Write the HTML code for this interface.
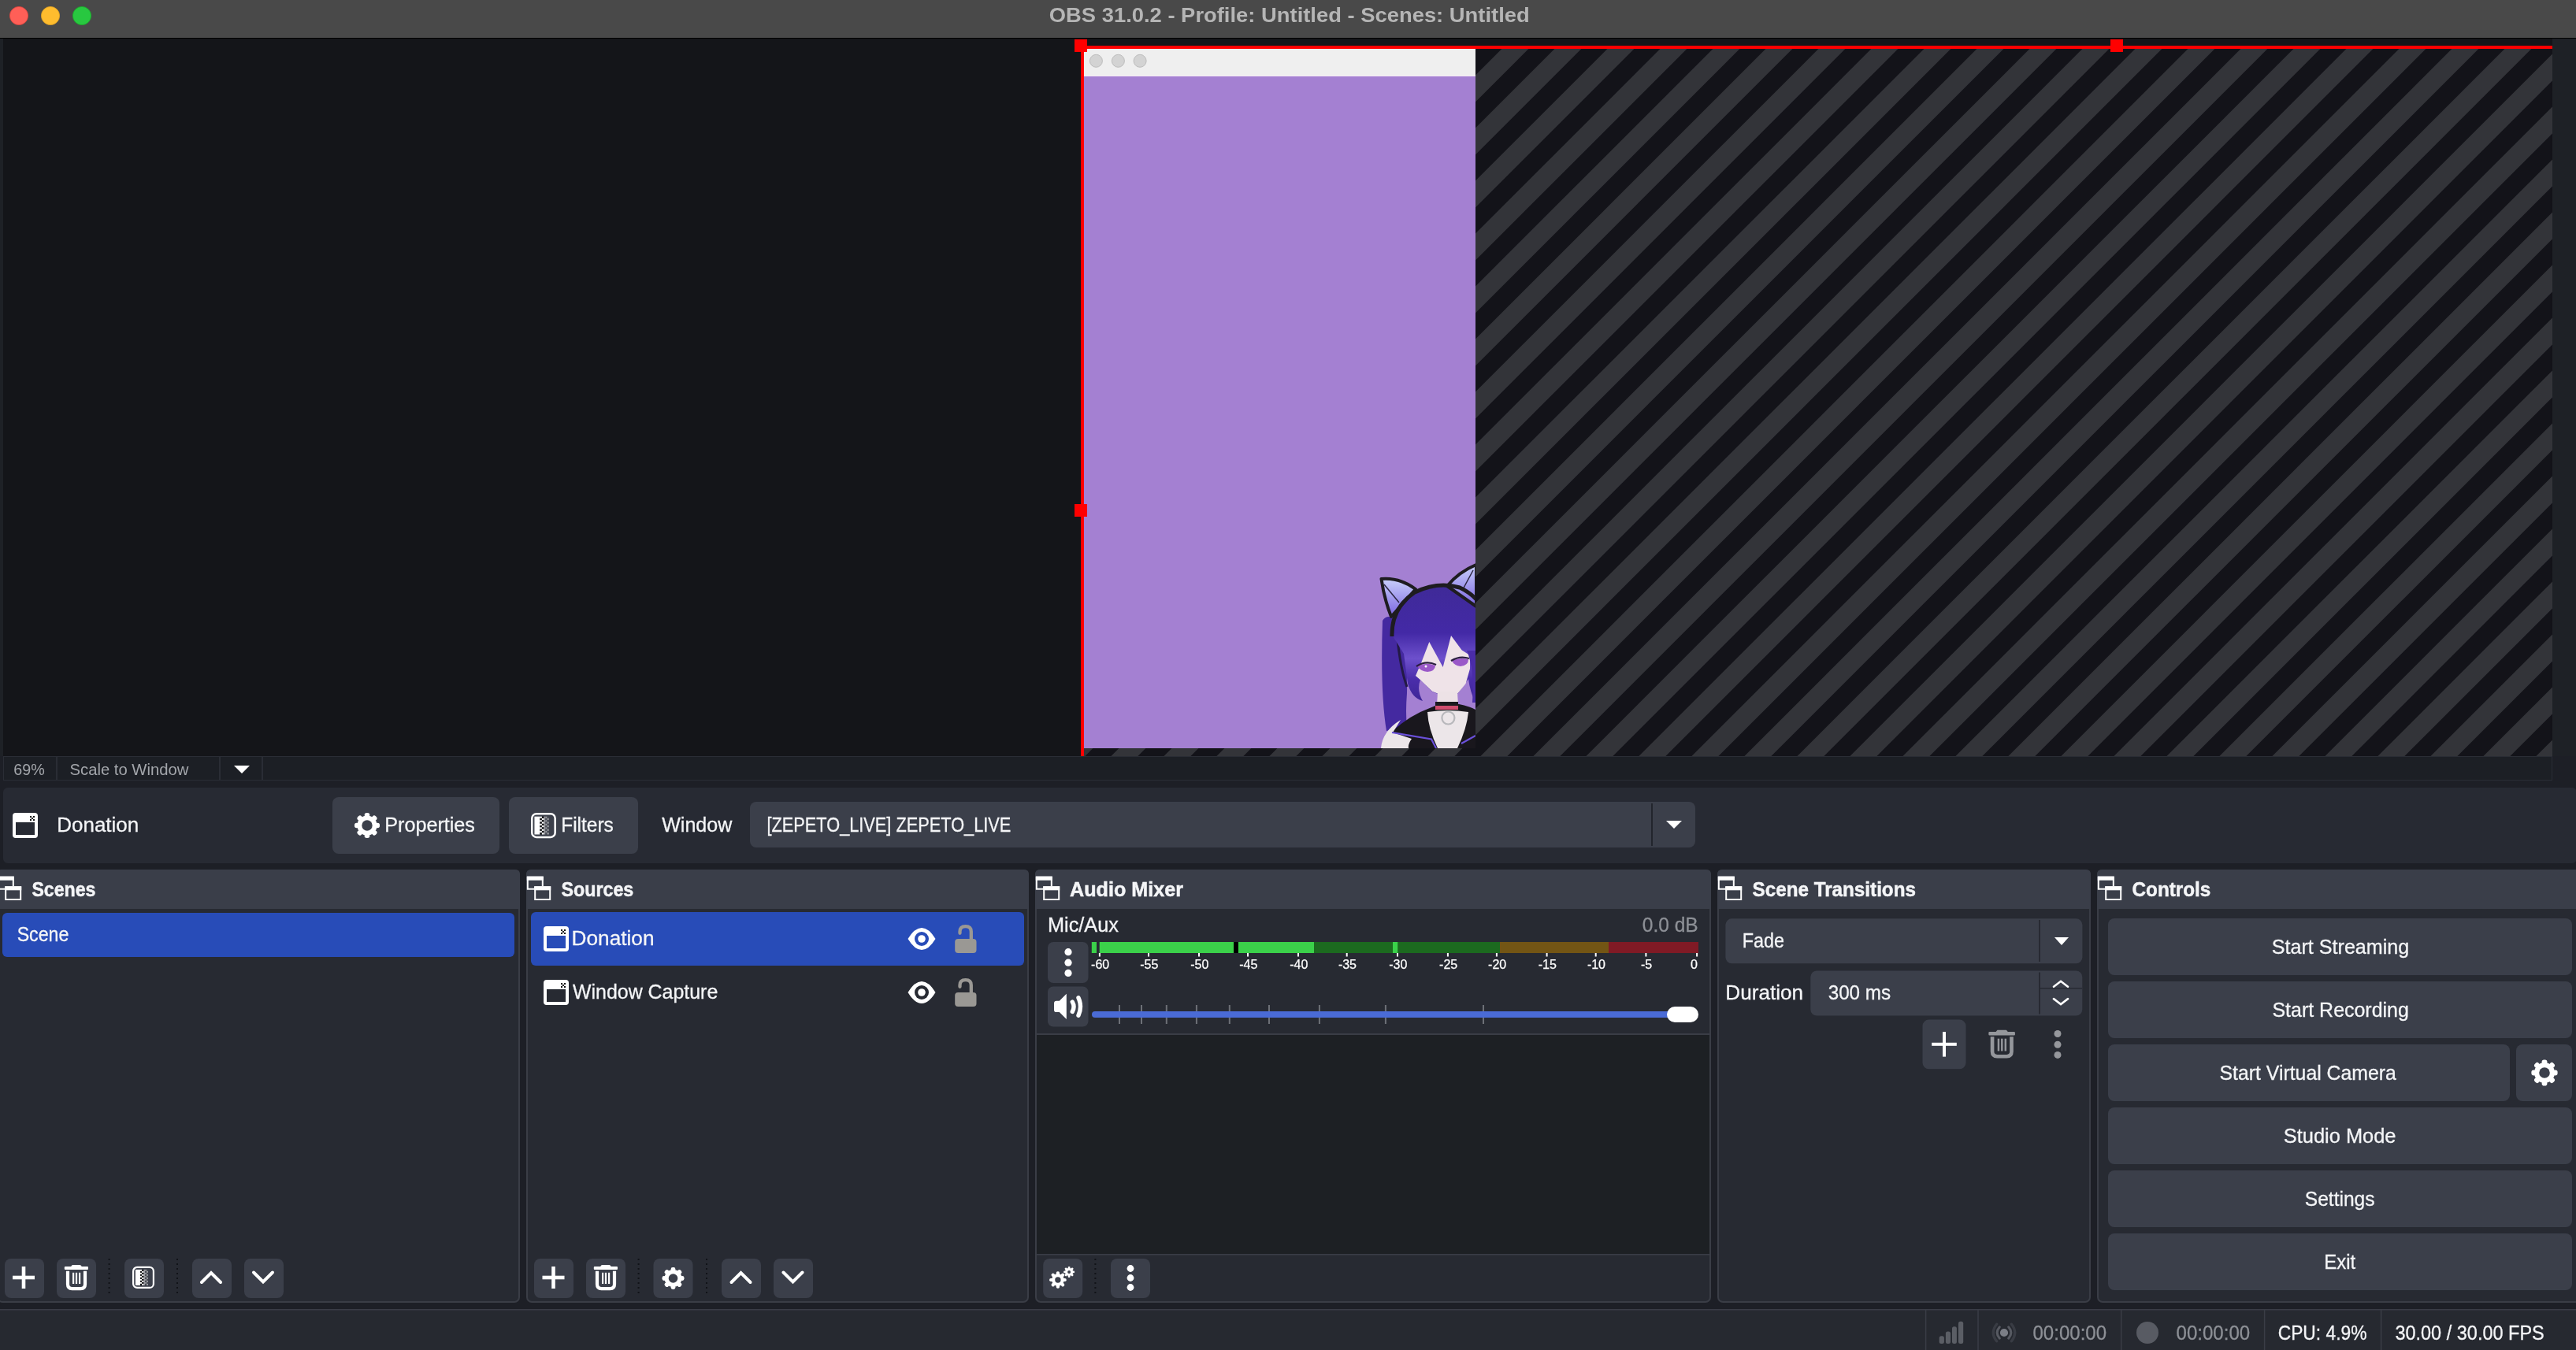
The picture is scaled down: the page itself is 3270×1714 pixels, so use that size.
<!DOCTYPE html>
<html><head><meta charset="utf-8"><title>OBS</title>
<style>html,body{margin:0;padding:0;background:#1d1f26;overflow:hidden;width:3270px;height:1714px}svg{display:block;position:absolute;left:0;top:0}#tx{will-change:transform}text{font-family:"Liberation Sans",sans-serif;white-space:pre}</style>
</head><body>
<svg width="3270" height="1714" viewBox="0 0 3270 1714">
<rect x="0" y="0" width="3270" height="1714" rx="0" fill="#1d1f26" />
<rect x="0" y="0" width="3270" height="48" rx="0" fill="#494949" />
<rect x="0" y="48" width="3270" height="1" rx="0" fill="#000" />
<circle cx="24" cy="20" r="11.6" fill="#ff5f57" stroke="#e0443e" stroke-width="0.8"/>
<circle cx="64" cy="20" r="11.6" fill="#febc2e" stroke="#dea123" stroke-width="0.8"/>
<circle cx="104" cy="20" r="11.6" fill="#28c840" stroke="#1aab29" stroke-width="0.8"/>
<rect x="0" y="49" width="3270" height="911" rx="0" fill="#141519" />
<rect x="0" y="49" width="4" height="911" rx="0" fill="#1e2126" />
<rect x="3240" y="49" width="30" height="911" rx="0" fill="#1e2126" />
<clipPath id="cv"><rect x="1376" y="62" width="1864" height="898"/></clipPath>
<g clip-path="url(#cv)">
<rect x="1376" y="62" width="1864" height="898" fill="#131319"/>
<path d="M1236.4,62L1270.4,62L372.4,960L338.4,960ZM1303.4,62L1337.4,62L439.4,960L405.4,960ZM1370.4,62L1404.4,62L506.4,960L472.4,960ZM1437.4,62L1471.4,62L573.4,960L539.4,960ZM1504.4,62L1538.4,62L640.4,960L606.4,960ZM1571.4,62L1605.4,62L707.4,960L673.4,960ZM1638.4,62L1672.4,62L774.4,960L740.4,960ZM1705.4,62L1739.4,62L841.4,960L807.4,960ZM1772.4,62L1806.4,62L908.4,960L874.4,960ZM1839.4,62L1873.4,62L975.4,960L941.4,960ZM1906.4,62L1940.4,62L1042.4,960L1008.4,960ZM1973.4,62L2007.4,62L1109.4,960L1075.4,960ZM2040.4,62L2074.4,62L1176.4,960L1142.4,960ZM2107.4,62L2141.4,62L1243.4,960L1209.4,960ZM2174.4,62L2208.4,62L1310.4,960L1276.4,960ZM2241.4,62L2275.4,62L1377.4,960L1343.4,960ZM2308.4,62L2342.4,62L1444.4,960L1410.4,960ZM2375.4,62L2409.4,62L1511.4,960L1477.4,960ZM2442.4,62L2476.4,62L1578.4,960L1544.4,960ZM2509.4,62L2543.4,62L1645.4,960L1611.4,960ZM2576.4,62L2610.4,62L1712.4,960L1678.4,960ZM2643.4,62L2677.4,62L1779.4,960L1745.4,960ZM2710.4,62L2744.4,62L1846.4,960L1812.4,960ZM2777.4,62L2811.4,62L1913.4,960L1879.4,960ZM2844.4,62L2878.4,62L1980.4,960L1946.4,960ZM2911.4,62L2945.4,62L2047.4,960L2013.4,960ZM2978.4,62L3012.4,62L2114.4,960L2080.4,960ZM3045.4,62L3079.4,62L2181.4,960L2147.4,960ZM3112.4,62L3146.4,62L2248.4,960L2214.4,960ZM3179.4,62L3213.4,62L2315.4,960L2281.4,960ZM3246.4,62L3280.4,62L2382.4,960L2348.4,960ZM3313.4,62L3347.4,62L2449.4,960L2415.4,960ZM3380.4,62L3414.4,62L2516.4,960L2482.4,960ZM3447.4,62L3481.4,62L2583.4,960L2549.4,960ZM3514.4,62L3548.4,62L2650.4,960L2616.4,960ZM3581.4,62L3615.4,62L2717.4,960L2683.4,960ZM3648.4,62L3682.4,62L2784.4,960L2750.4,960ZM3715.4,62L3749.4,62L2851.4,960L2817.4,960ZM3782.4,62L3816.4,62L2918.4,960L2884.4,960ZM3849.4,62L3883.4,62L2985.4,960L2951.4,960ZM3916.4,62L3950.4,62L3052.4,960L3018.4,960ZM3983.4,62L4017.4,62L3119.4,960L3085.4,960ZM4050.4,62L4084.4,62L3186.4,960L3152.4,960ZM4117.4,62L4151.4,62L3253.4,960L3219.4,960ZM4184.4,62L4218.4,62L3320.4,960L3286.4,960Z" fill="#333439"/>
</g>
<rect x="1376" y="62" width="497" height="35" rx="0" fill="#efefef" />
<rect x="1376" y="96" width="497" height="1" rx="0" fill="#f6e9f6" />
<circle cx="1391.4" cy="77.3" r="8" fill="#d3d3d3" stroke="#bcbcbc" stroke-width="1"/>
<circle cx="1419.4" cy="77.3" r="8" fill="#d3d3d3" stroke="#bcbcbc" stroke-width="1"/>
<circle cx="1447.1" cy="77.3" r="8" fill="#d3d3d3" stroke="#bcbcbc" stroke-width="1"/>
<rect x="1376" y="97" width="497" height="853" rx="0" fill="#a480d2" />
<clipPath id="win"><rect x="1376" y="97" width="497" height="853"/></clipPath>
<defs>
<linearGradient id="earg" x1="0" y1="0" x2="0" y2="1"><stop offset="0" stop-color="#c9d0fb"/><stop offset="1" stop-color="#7a64e0"/></linearGradient>
<linearGradient id="hairg" x1="0" y1="0" x2="0" y2="1"><stop offset="0" stop-color="#3f2a98"/><stop offset="0.4" stop-color="#4329a6"/><stop offset="0.62" stop-color="#6d50cc"/><stop offset="0.8" stop-color="#4a2daa"/><stop offset="1" stop-color="#3d2596"/></linearGradient>
</defs>
<g clip-path="url(#win)">
<!-- ponytail -->
<path d="M1755,788 Q1760,780 1770,785 L1787,800 L1786,880 Q1784,905 1786,922 L1760,928 Q1752,880 1755,788 Z" fill="#4429a0"/>
<path d="M1774,812 Q1778,850 1786,872" fill="none" stroke="#231a45" stroke-width="3"/>
<!-- hair mass -->
<path d="M1767,806 Q1768,770 1800,752 Q1830,740 1855,748 Q1868,755 1873,764 L1873,892 Q1866,878 1864,862 L1851,880 L1837,886 L1818,878 L1803,863 Q1798,876 1806,890 Q1792,886 1787,868 L1782,830 Z" fill="url(#hairg)"/>
<!-- face -->
<path d="M1797,858 L1804.7,840 L1814.3,815 L1831.7,847 L1842,807 L1855.7,825.6 L1866,832 L1866,849 L1860.6,868 L1851,879.7 L1837.4,885.5 L1818,877.8 L1802.8,863 Z" fill="#efe3e8"/>
<!-- eyes -->
<path d="M1799,846 Q1810,840 1822,845 Q1822,852 1812,853 Q1803,852 1799,846 Z" fill="#9a58c8"/>
<path d="M1798,846 Q1810,838 1823,844" fill="none" stroke="#2a1e40" stroke-width="2.2"/>
<circle cx="1810" cy="846" r="1.5" fill="#fff"/>
<path d="M1843,839 Q1853,834 1864,837 Q1864,845 1854,846 Q1846,845 1843,839 Z" fill="#9a58c8"/>
<path d="M1842,839 Q1853,832 1865,836" fill="none" stroke="#2a1e40" stroke-width="2.2"/>
<!-- right hair strand -->
<path d="M1862,826 Q1872,850 1869,892 L1873,892 L1873,826 Z" fill="#4a2ca8"/>
<!-- neck -->
<path d="M1825,878 L1850,878 L1851,896 L1824,896 Z" fill="#ede2e6"/>
<!-- clothes -->
<path d="M1762,934 Q1780,915 1803,904 L1822,896 L1852,894 Q1866,897 1873,901 L1873,950 L1760,950 Z" fill="#19171d"/>
<path d="M1812,904 Q1838,900 1864,904 Q1862,925 1850,950 L1825,950 Q1813,925 1812,904 Z" fill="#ece6e9"/>
<path d="M1753,950 Q1755,928 1778,914 Q1772,924 1768,930 L1792,938 Q1787,945 1788,950 Z" fill="#ece6e9"/>
<path d="M1767,930 L1817,938.5 L1823,950" fill="none" stroke="#6a50da" stroke-width="2.2"/>
<path d="M1855,944 L1873,934" fill="none" stroke="#6a50da" stroke-width="2.2"/>
<!-- choker -->
<rect x="1822" y="891" width="29" height="5" fill="#1a1a1e"/>
<rect x="1822" y="896" width="29" height="5" fill="#cf4d6e"/>
<circle cx="1838.4" cy="911.5" r="8" fill="none" stroke="#b8b8bc" stroke-width="2.2"/>
<!-- ears -->
<path d="M1753.5,735 Q1777,733 1797,748 L1766,783 Q1757,760 1753.5,735 Z" fill="url(#earg)" stroke="#1e1c20" stroke-width="4" stroke-linejoin="round"/>
<path d="M1757,742 L1776,765" stroke="#2a2540" stroke-width="1.5"/>
<path d="M1837,744 Q1852,726 1874,717 L1874,770 Z" fill="url(#earg)" stroke="#1e1c20" stroke-width="4" stroke-linejoin="round"/>
<path d="M1870,724 L1856,750" stroke="#2a2540" stroke-width="1.5"/>
<!-- headband -->
<path d="M1767,808 Q1766,772 1796,752 Q1825,738 1853,746 Q1866,752 1875,762" fill="none" stroke="#1e1c20" stroke-width="5"/>
</g>

<rect x="1372" y="58" width="1868" height="4" rx="0" fill="#ff0000" />
<rect x="1372" y="58" width="4" height="902" rx="0" fill="#ff0000" />
<rect x="1364" y="50" width="16" height="16" rx="0" fill="#ff0000" />
<rect x="1364" y="640" width="16" height="16" rx="0" fill="#ff0000" />
<rect x="2679" y="50" width="16" height="16" rx="0" fill="#ff0000" />
<rect x="0" y="960" width="3270" height="40" rx="0" fill="#1d1f26" />
<rect x="4" y="960" width="3236" height="31" rx="0" fill="#1c1f25" />
<rect x="4.5" y="960.5" width="67" height="30" fill="none" stroke="#2a2d35" stroke-width="1"/>
<rect x="72.5" y="960.5" width="206" height="30" fill="none" stroke="#2a2d35" stroke-width="1"/>
<rect x="279.5" y="960.5" width="53" height="30" fill="none" stroke="#2a2d35" stroke-width="1"/>
<rect x="333.5" y="960.5" width="2906" height="30" fill="none" stroke="#2a2d35" stroke-width="1"/>
<path d="M297,972 L317,972 L307,982 Z" fill="#fff"/>
<rect x="4" y="1000" width="3267" height="96" rx="6" fill="#272a33" />
<rect x="16" y="1032" width="32" height="32" rx="4" fill="#fff"/>
<rect x="20" y="1044" width="24" height="16" fill="#272a33"/>
<rect x="38" y="1036" width="2" height="2" fill="#111"/>
<rect x="42" y="1036" width="2" height="2" fill="#111"/>
<rect x="40" y="1038" width="2" height="2" fill="#111"/>
<rect x="38" y="1040" width="2" height="2" fill="#111"/>
<rect x="42" y="1040" width="2" height="2" fill="#111"/>
<rect x="422" y="1012" width="212" height="72" rx="8" fill="#3b3f4a" />
<rect x="646" y="1012" width="164" height="72" rx="8" fill="#3b3f4a" />
<g fill="#fff"><circle cx="466" cy="1048" r="12.6"/><rect x="462.70" y="1032.00" width="6.60" height="5.40" rx="2.77" transform="rotate(0.0 466 1048)"/><rect x="462.70" y="1032.00" width="6.60" height="5.40" rx="2.77" transform="rotate(45.0 466 1048)"/><rect x="462.70" y="1032.00" width="6.60" height="5.40" rx="2.77" transform="rotate(90.0 466 1048)"/><rect x="462.70" y="1032.00" width="6.60" height="5.40" rx="2.77" transform="rotate(135.0 466 1048)"/><rect x="462.70" y="1032.00" width="6.60" height="5.40" rx="2.77" transform="rotate(180.0 466 1048)"/><rect x="462.70" y="1032.00" width="6.60" height="5.40" rx="2.77" transform="rotate(225.0 466 1048)"/><rect x="462.70" y="1032.00" width="6.60" height="5.40" rx="2.77" transform="rotate(270.0 466 1048)"/><rect x="462.70" y="1032.00" width="6.60" height="5.40" rx="2.77" transform="rotate(315.0 466 1048)"/></g><circle cx="466" cy="1048" r="6.7" fill="#3b3f4a"/>
<g transform="translate(674,1032) scale(1.14)"><rect x="1.1" y="1.1" width="25.8" height="26" rx="5" fill="none" stroke="#fff" stroke-width="2.2"/><rect x="3.9" y="4.1" width="6.1" height="20" fill="#fff"/><rect x="14.3" y="4.1" width="1.8" height="20" fill="#9a9ba0"/><rect x="10" y="4.1" width="2.2" height="2" fill="#fff"/><rect x="12.2" y="4.1" width="2.1" height="2" fill="#111"/><rect x="16.1" y="4.1" width="1.9" height="2" fill="#9a9ba0"/><rect x="18" y="4.1" width="2" height="2" fill="#4a4d55"/><rect x="10" y="6.1" width="2.2" height="2" fill="#111"/><rect x="12.2" y="6.1" width="2.1" height="2" fill="#fff"/><rect x="16.1" y="6.1" width="1.9" height="2" fill="#4a4d55"/><rect x="18" y="6.1" width="2" height="2" fill="#9a9ba0"/><rect x="10" y="8.1" width="2.2" height="2" fill="#fff"/><rect x="12.2" y="8.1" width="2.1" height="2" fill="#111"/><rect x="16.1" y="8.1" width="1.9" height="2" fill="#9a9ba0"/><rect x="18" y="8.1" width="2" height="2" fill="#4a4d55"/><rect x="10" y="10.1" width="2.2" height="2" fill="#111"/><rect x="12.2" y="10.1" width="2.1" height="2" fill="#fff"/><rect x="16.1" y="10.1" width="1.9" height="2" fill="#4a4d55"/><rect x="18" y="10.1" width="2" height="2" fill="#9a9ba0"/><rect x="10" y="12.1" width="2.2" height="2" fill="#fff"/><rect x="12.2" y="12.1" width="2.1" height="2" fill="#111"/><rect x="16.1" y="12.1" width="1.9" height="2" fill="#9a9ba0"/><rect x="18" y="12.1" width="2" height="2" fill="#4a4d55"/><rect x="10" y="14.1" width="2.2" height="2" fill="#111"/><rect x="12.2" y="14.1" width="2.1" height="2" fill="#fff"/><rect x="16.1" y="14.1" width="1.9" height="2" fill="#4a4d55"/><rect x="18" y="14.1" width="2" height="2" fill="#9a9ba0"/><rect x="10" y="16.1" width="2.2" height="2" fill="#fff"/><rect x="12.2" y="16.1" width="2.1" height="2" fill="#111"/><rect x="16.1" y="16.1" width="1.9" height="2" fill="#9a9ba0"/><rect x="18" y="16.1" width="2" height="2" fill="#4a4d55"/><rect x="10" y="18.1" width="2.2" height="2" fill="#111"/><rect x="12.2" y="18.1" width="2.1" height="2" fill="#fff"/><rect x="16.1" y="18.1" width="1.9" height="2" fill="#4a4d55"/><rect x="18" y="18.1" width="2" height="2" fill="#9a9ba0"/><rect x="10" y="20.1" width="2.2" height="2" fill="#fff"/><rect x="12.2" y="20.1" width="2.1" height="2" fill="#111"/><rect x="16.1" y="20.1" width="1.9" height="2" fill="#9a9ba0"/><rect x="18" y="20.1" width="2" height="2" fill="#4a4d55"/><rect x="10" y="22.1" width="2.2" height="2" fill="#111"/><rect x="12.2" y="22.1" width="2.1" height="2" fill="#fff"/><rect x="16.1" y="22.1" width="1.9" height="2" fill="#4a4d55"/><rect x="18" y="22.1" width="2" height="2" fill="#9a9ba0"/></g>
<rect x="952" y="1018" width="1200" height="58" rx="8" fill="#3b3f4a" />
<rect x="2096" y="1020" width="2" height="54" rx="0" fill="#22252d" />
<path d="M2115,1042 L2135,1042 L2125,1052 Z" fill="#fff"/>
<rect x="-3" y="1105" width="662" height="548" rx="6" fill="#272a32" stroke="#3a3d46" stroke-width="2"/>
<path d="M-4,1154 L-4,1110 Q-4,1104 2,1104 L654,1104 Q660,1104 660,1110 L660,1154 Z" fill="#3a3e49"/>
<rect x="-2.2" y="1113.7" width="19" height="15" fill="none" stroke="#fff" stroke-width="2"/>
<rect x="-3.2" y="1112.7" width="21" height="5" fill="#fff"/>
<rect x="6.2" y="1125.3" width="21" height="17.7" fill="#3a3e49"/>
<rect x="7.2" y="1126.3" width="19" height="15.7" fill="none" stroke="#fff" stroke-width="2"/>
<rect x="6.2" y="1125.3" width="21" height="5" fill="#fff"/>
<rect x="669" y="1105" width="636" height="548" rx="6" fill="#272a32" stroke="#3a3d46" stroke-width="2"/>
<path d="M668,1154 L668,1110 Q668,1104 674,1104 L1300,1104 Q1306,1104 1306,1110 L1306,1154 Z" fill="#3a3e49"/>
<rect x="669.8" y="1113.7" width="19" height="15" fill="none" stroke="#fff" stroke-width="2"/>
<rect x="668.8" y="1112.7" width="21" height="5" fill="#fff"/>
<rect x="678.1999999999999" y="1125.3" width="21" height="17.7" fill="#3a3e49"/>
<rect x="679.1999999999999" y="1126.3" width="19" height="15.7" fill="none" stroke="#fff" stroke-width="2"/>
<rect x="678.1999999999999" y="1125.3" width="21" height="5" fill="#fff"/>
<rect x="1315" y="1105" width="856" height="548" rx="6" fill="#272a32" stroke="#3a3d46" stroke-width="2"/>
<path d="M1314,1154 L1314,1110 Q1314,1104 1320,1104 L2166,1104 Q2172,1104 2172,1110 L2172,1154 Z" fill="#3a3e49"/>
<rect x="1315.8" y="1113.7" width="19" height="15" fill="none" stroke="#fff" stroke-width="2"/>
<rect x="1314.8" y="1112.7" width="21" height="5" fill="#fff"/>
<rect x="1324.2" y="1125.3" width="21" height="17.7" fill="#3a3e49"/>
<rect x="1325.2" y="1126.3" width="19" height="15.7" fill="none" stroke="#fff" stroke-width="2"/>
<rect x="1324.2" y="1125.3" width="21" height="5" fill="#fff"/>
<rect x="2181" y="1105" width="472" height="548" rx="6" fill="#272a32" stroke="#3a3d46" stroke-width="2"/>
<path d="M2180,1154 L2180,1110 Q2180,1104 2186,1104 L2648,1104 Q2654,1104 2654,1110 L2654,1154 Z" fill="#3a3e49"/>
<rect x="2181.8" y="1113.7" width="19" height="15" fill="none" stroke="#fff" stroke-width="2"/>
<rect x="2180.8" y="1112.7" width="21" height="5" fill="#fff"/>
<rect x="2190.2000000000003" y="1125.3" width="21" height="17.7" fill="#3a3e49"/>
<rect x="2191.2000000000003" y="1126.3" width="19" height="15.7" fill="none" stroke="#fff" stroke-width="2"/>
<rect x="2190.2000000000003" y="1125.3" width="21" height="5" fill="#fff"/>
<rect x="2663" y="1105" width="626" height="548" rx="6" fill="#272a32" stroke="#3a3d46" stroke-width="2"/>
<path d="M2662,1154 L2662,1110 Q2662,1104 2668,1104 L3284,1104 Q3290,1104 3290,1110 L3290,1154 Z" fill="#3a3e49"/>
<rect x="2663.8" y="1113.7" width="19" height="15" fill="none" stroke="#fff" stroke-width="2"/>
<rect x="2662.8" y="1112.7" width="21" height="5" fill="#fff"/>
<rect x="2672.2000000000003" y="1125.3" width="21" height="17.7" fill="#3a3e49"/>
<rect x="2673.2000000000003" y="1126.3" width="19" height="15.7" fill="none" stroke="#fff" stroke-width="2"/>
<rect x="2672.2000000000003" y="1125.3" width="21" height="5" fill="#fff"/>
<rect x="3" y="1159" width="650" height="56" rx="6" fill="#284cb8" />
<rect x="6" y="1598" width="50" height="50" rx="8" fill="#3b3f4a" />
<rect x="27.7" y="1608.0" width="4.6" height="28" fill="#fff"/>
<rect x="16.0" y="1619.7" width="28" height="4.6" fill="#fff"/>
<rect x="72" y="1598" width="50" height="50" rx="8" fill="#3b3f4a" />
<g transform="translate(81.8,1606) scale(1.0)">
<path d="M8.3,2 L10,0 L20.2,0 L22,2 Z" fill="#fff"/>
<rect x="0" y="2" width="30.2" height="4.1" rx="1" fill="#fff"/>
<path d="M4.2,7.7 L4.2,24.6 Q4.2,30.1 9.7,30.1 L20.7,30.1 Q26.2,30.1 26.2,24.6 L26.2,7.7" fill="none" stroke="#fff" stroke-width="4.2"/>
<rect x="10.2" y="9.8" width="2.2" height="14.2" fill="#fff"/>
<rect x="14.1" y="9.8" width="2.2" height="14.2" fill="#fff"/>
<rect x="18.2" y="9.8" width="2.2" height="14.2" fill="#fff"/>
</g>
<line x1="138.6" y1="1598" x2="138.6" y2="1646" stroke="#111318" stroke-width="2" stroke-dasharray="2 4"/>
<rect x="158" y="1598" width="50" height="50" rx="8" fill="#3b3f4a" />
<g transform="translate(168,1607.8) scale(1.0)"><rect x="1.1" y="1.1" width="25.8" height="26" rx="5" fill="none" stroke="#fff" stroke-width="2.2"/><rect x="3.9" y="4.1" width="6.1" height="20" fill="#fff"/><rect x="14.3" y="4.1" width="1.8" height="20" fill="#9a9ba0"/><rect x="10" y="4.1" width="2.2" height="2" fill="#fff"/><rect x="12.2" y="4.1" width="2.1" height="2" fill="#111"/><rect x="16.1" y="4.1" width="1.9" height="2" fill="#9a9ba0"/><rect x="18" y="4.1" width="2" height="2" fill="#4a4d55"/><rect x="10" y="6.1" width="2.2" height="2" fill="#111"/><rect x="12.2" y="6.1" width="2.1" height="2" fill="#fff"/><rect x="16.1" y="6.1" width="1.9" height="2" fill="#4a4d55"/><rect x="18" y="6.1" width="2" height="2" fill="#9a9ba0"/><rect x="10" y="8.1" width="2.2" height="2" fill="#fff"/><rect x="12.2" y="8.1" width="2.1" height="2" fill="#111"/><rect x="16.1" y="8.1" width="1.9" height="2" fill="#9a9ba0"/><rect x="18" y="8.1" width="2" height="2" fill="#4a4d55"/><rect x="10" y="10.1" width="2.2" height="2" fill="#111"/><rect x="12.2" y="10.1" width="2.1" height="2" fill="#fff"/><rect x="16.1" y="10.1" width="1.9" height="2" fill="#4a4d55"/><rect x="18" y="10.1" width="2" height="2" fill="#9a9ba0"/><rect x="10" y="12.1" width="2.2" height="2" fill="#fff"/><rect x="12.2" y="12.1" width="2.1" height="2" fill="#111"/><rect x="16.1" y="12.1" width="1.9" height="2" fill="#9a9ba0"/><rect x="18" y="12.1" width="2" height="2" fill="#4a4d55"/><rect x="10" y="14.1" width="2.2" height="2" fill="#111"/><rect x="12.2" y="14.1" width="2.1" height="2" fill="#fff"/><rect x="16.1" y="14.1" width="1.9" height="2" fill="#4a4d55"/><rect x="18" y="14.1" width="2" height="2" fill="#9a9ba0"/><rect x="10" y="16.1" width="2.2" height="2" fill="#fff"/><rect x="12.2" y="16.1" width="2.1" height="2" fill="#111"/><rect x="16.1" y="16.1" width="1.9" height="2" fill="#9a9ba0"/><rect x="18" y="16.1" width="2" height="2" fill="#4a4d55"/><rect x="10" y="18.1" width="2.2" height="2" fill="#111"/><rect x="12.2" y="18.1" width="2.1" height="2" fill="#fff"/><rect x="16.1" y="18.1" width="1.9" height="2" fill="#4a4d55"/><rect x="18" y="18.1" width="2" height="2" fill="#9a9ba0"/><rect x="10" y="20.1" width="2.2" height="2" fill="#fff"/><rect x="12.2" y="20.1" width="2.1" height="2" fill="#111"/><rect x="16.1" y="20.1" width="1.9" height="2" fill="#9a9ba0"/><rect x="18" y="20.1" width="2" height="2" fill="#4a4d55"/><rect x="10" y="22.1" width="2.2" height="2" fill="#111"/><rect x="12.2" y="22.1" width="2.1" height="2" fill="#fff"/><rect x="16.1" y="22.1" width="1.9" height="2" fill="#4a4d55"/><rect x="18" y="22.1" width="2" height="2" fill="#9a9ba0"/></g>
<line x1="225" y1="1598" x2="225" y2="1646" stroke="#111318" stroke-width="2" stroke-dasharray="2 4"/>
<rect x="244" y="1598" width="50" height="50" rx="8" fill="#3b3f4a" />
<path d="M256.0,1628.0 L268,1616.0 L280.0,1628.0" fill="none" stroke="#fff" stroke-width="4" stroke-linecap="round" stroke-linejoin="miter"/>
<rect x="310" y="1598" width="50" height="50" rx="8" fill="#3b3f4a" />
<path d="M322.0,1615.5 L334,1627.5 L346.0,1615.5" fill="none" stroke="#fff" stroke-width="4" stroke-linecap="round" stroke-linejoin="miter"/>
<rect x="674" y="1158" width="626" height="68" rx="6" fill="#284cb8" />
<rect x="690" y="1176" width="32" height="32" rx="4" fill="#fff"/>
<rect x="694" y="1188" width="24" height="16" fill="#284cb8"/>
<rect x="712" y="1180" width="2" height="2" fill="#111"/>
<rect x="716" y="1180" width="2" height="2" fill="#111"/>
<rect x="714" y="1182" width="2" height="2" fill="#111"/>
<rect x="712" y="1184" width="2" height="2" fill="#111"/>
<rect x="716" y="1184" width="2" height="2" fill="#111"/>
<rect x="690" y="1244" width="32" height="32" rx="4" fill="#fff"/>
<rect x="694" y="1256" width="24" height="16" fill="#272a32"/>
<rect x="712" y="1248" width="2" height="2" fill="#111"/>
<rect x="716" y="1248" width="2" height="2" fill="#111"/>
<rect x="714" y="1250" width="2" height="2" fill="#111"/>
<rect x="712" y="1252" width="2" height="2" fill="#111"/>
<rect x="716" y="1252" width="2" height="2" fill="#111"/>
<path d="M1152.5,1192 Q1161,1178 1170,1178 Q1179,1178 1187.5,1192 Q1179,1206 1170,1206 Q1161,1206 1152.5,1192 Z" fill="#fff"/>
<circle cx="1170" cy="1192" r="9" fill="#284cb8"/>
<circle cx="1170" cy="1192" r="4.8" fill="#fff"/>
<rect x="1212.2" y="1192" width="27.3" height="18" rx="4" fill="#9a9894"/>
<path d="M1218.5,1184.8 L1218.5,1182.7 Q1218.5,1176.1 1225.7,1176.1 Q1232.8,1176.1 1232.8,1182.7 L1232.8,1193" fill="none" stroke="#9a9894" stroke-width="4.3" stroke-linecap="round"/>
<path d="M1152.5,1260 Q1161,1246 1170,1246 Q1179,1246 1187.5,1260 Q1179,1274 1170,1274 Q1161,1274 1152.5,1260 Z" fill="#fff"/>
<circle cx="1170" cy="1260" r="9" fill="#272a32"/>
<circle cx="1170" cy="1260" r="4.8" fill="#fff"/>
<rect x="1212.2" y="1260" width="27.3" height="18" rx="4" fill="#9a9894"/>
<path d="M1218.5,1252.8 L1218.5,1250.7 Q1218.5,1244.1 1225.7,1244.1 Q1232.8,1244.1 1232.8,1250.7 L1232.8,1261" fill="none" stroke="#9a9894" stroke-width="4.3" stroke-linecap="round"/>
<rect x="678" y="1598" width="50" height="50" rx="8" fill="#3b3f4a" />
<rect x="700.2" y="1608.0" width="4.6" height="28" fill="#fff"/>
<rect x="688.5" y="1619.7" width="28" height="4.6" fill="#fff"/>
<rect x="744" y="1598" width="50" height="50" rx="8" fill="#3b3f4a" />
<g transform="translate(753.8,1606) scale(1.0)">
<path d="M8.3,2 L10,0 L20.2,0 L22,2 Z" fill="#fff"/>
<rect x="0" y="2" width="30.2" height="4.1" rx="1" fill="#fff"/>
<path d="M4.2,7.7 L4.2,24.6 Q4.2,30.1 9.7,30.1 L20.7,30.1 Q26.2,30.1 26.2,24.6 L26.2,7.7" fill="none" stroke="#fff" stroke-width="4.2"/>
<rect x="10.2" y="9.8" width="2.2" height="14.2" fill="#fff"/>
<rect x="14.1" y="9.8" width="2.2" height="14.2" fill="#fff"/>
<rect x="18.2" y="9.8" width="2.2" height="14.2" fill="#fff"/>
</g>
<line x1="810.6" y1="1598" x2="810.6" y2="1646" stroke="#111318" stroke-width="2" stroke-dasharray="2 4"/>
<rect x="829.5" y="1598" width="50" height="50" rx="8" fill="#3b3f4a" />
<g fill="#fff"><circle cx="854.5" cy="1623" r="11"/><rect x="851.60" y="1609.00" width="5.80" height="5.00" rx="2.44" transform="rotate(0.0 854.5 1623)"/><rect x="851.60" y="1609.00" width="5.80" height="5.00" rx="2.44" transform="rotate(45.0 854.5 1623)"/><rect x="851.60" y="1609.00" width="5.80" height="5.00" rx="2.44" transform="rotate(90.0 854.5 1623)"/><rect x="851.60" y="1609.00" width="5.80" height="5.00" rx="2.44" transform="rotate(135.0 854.5 1623)"/><rect x="851.60" y="1609.00" width="5.80" height="5.00" rx="2.44" transform="rotate(180.0 854.5 1623)"/><rect x="851.60" y="1609.00" width="5.80" height="5.00" rx="2.44" transform="rotate(225.0 854.5 1623)"/><rect x="851.60" y="1609.00" width="5.80" height="5.00" rx="2.44" transform="rotate(270.0 854.5 1623)"/><rect x="851.60" y="1609.00" width="5.80" height="5.00" rx="2.44" transform="rotate(315.0 854.5 1623)"/></g><circle cx="854.5" cy="1623" r="5.8" fill="#3b3f4a"/>
<line x1="897" y1="1598" x2="897" y2="1646" stroke="#111318" stroke-width="2" stroke-dasharray="2 4"/>
<rect x="916" y="1598" width="50" height="50" rx="8" fill="#3b3f4a" />
<path d="M928.5,1628.0 L940.5,1616.0 L952.5,1628.0" fill="none" stroke="#fff" stroke-width="4" stroke-linecap="round" stroke-linejoin="miter"/>
<rect x="982" y="1598" width="50" height="50" rx="8" fill="#3b3f4a" />
<path d="M994.5,1615.5 L1006.5,1627.5 L1018.5,1615.5" fill="none" stroke="#fff" stroke-width="4" stroke-linecap="round" stroke-linejoin="miter"/>
<rect x="1316" y="1154" width="854" height="158" rx="0" fill="#272a32" />
<rect x="1316" y="1312" width="854" height="2" rx="0" fill="#3a3d46" />
<rect x="1316" y="1314" width="854" height="278" rx="0" fill="#1d2024" />
<rect x="1316" y="1592" width="854" height="1.5" rx="0" fill="#3a3d46" />
<rect x="1330" y="1196" width="51.5" height="52" rx="7" fill="#3b3f4a" />
<circle cx="1356" cy="1208.7" r="4.6" fill="#fff"/>
<circle cx="1356" cy="1222.2" r="4.6" fill="#fff"/>
<circle cx="1356" cy="1235.4" r="4.6" fill="#fff"/>
<rect x="1330" y="1252.5" width="51.5" height="51" rx="7" fill="#3b3f4a" />
<path d="M1338,1274 Q1338,1270.8 1341.2,1270.8 L1344.8,1270.8 L1353.8,1261.8 L1353.8,1294 L1344.8,1285.1 L1341.2,1285.1 Q1338,1285.1 1338,1281.9 Z" fill="#fff"/>
<path d="M1361.3,1272 Q1364.8,1278.2 1361.3,1284.4" fill="none" stroke="#fff" stroke-width="5.4" stroke-linecap="round"/>
<path d="M1369,1266.8 Q1374,1278 1369,1289.2" fill="none" stroke="#fff" stroke-width="5.4" stroke-linecap="round"/>
<rect x="1385.8" y="1196" width="282.2" height="14" rx="0" fill="#3bd14a" />
<rect x="1668" y="1196" width="236" height="14" rx="0" fill="#1c6a1f" />
<rect x="1904" y="1196" width="138" height="14" rx="0" fill="#735514" />
<rect x="2042" y="1196" width="114" height="14" rx="0" fill="#801a25" />
<rect x="1392" y="1196" width="3.7" height="14" rx="0" fill="#272a32" />
<rect x="1566" y="1196" width="6" height="14" rx="0" fill="#000" />
<rect x="1768" y="1196" width="6.2" height="14" rx="0" fill="#3bd14a" />
<rect x="1394.9" y="1210" width="2" height="4.5" rx="0" fill="#fff" />
<rect x="1457" y="1210" width="2" height="4.5" rx="0" fill="#fff" />
<rect x="1521" y="1210" width="2" height="4.5" rx="0" fill="#fff" />
<rect x="1583" y="1210" width="2" height="4.5" rx="0" fill="#fff" />
<rect x="1647" y="1210" width="2" height="4.5" rx="0" fill="#fff" />
<rect x="1708.7" y="1210" width="2" height="4.5" rx="0" fill="#fff" />
<rect x="1773" y="1210" width="2" height="4.5" rx="0" fill="#fff" />
<rect x="1836.9" y="1210" width="2" height="4.5" rx="0" fill="#fff" />
<rect x="1898.9" y="1210" width="2" height="4.5" rx="0" fill="#fff" />
<rect x="1962.6" y="1210" width="2" height="4.5" rx="0" fill="#fff" />
<rect x="2024.7" y="1210" width="2" height="4.5" rx="0" fill="#fff" />
<rect x="2088.4" y="1210" width="2" height="4.5" rx="0" fill="#fff" />
<rect x="2153.1" y="1210" width="2" height="4.5" rx="0" fill="#fff" />
<rect x="1420" y="1276" width="2" height="24" rx="0" fill="#6d7077" />
<rect x="1448" y="1276" width="2" height="24" rx="0" fill="#6d7077" />
<rect x="1479.8" y="1276" width="2" height="24" rx="0" fill="#6d7077" />
<rect x="1517.9" y="1276" width="2" height="24" rx="0" fill="#6d7077" />
<rect x="1559.8" y="1276" width="2" height="24" rx="0" fill="#6d7077" />
<rect x="1610" y="1276" width="2" height="24" rx="0" fill="#6d7077" />
<rect x="1673.9" y="1276" width="2" height="24" rx="0" fill="#6d7077" />
<rect x="1757.9" y="1276" width="2" height="24" rx="0" fill="#6d7077" />
<rect x="1882" y="1276" width="2" height="24" rx="0" fill="#6d7077" />
<line x1="1390" y1="1288" x2="2130" y2="1288" stroke="#4a6bd6" stroke-width="8" stroke-linecap="round"/>
<rect x="2116" y="1278" width="40" height="20" rx="10" fill="#fff" />
<rect x="1324.2" y="1598" width="50" height="50" rx="8" fill="#3b3f4a" />
<g fill="#fff"><circle cx="1342.9" cy="1625" r="7.8"/><rect x="1340.80" y="1614.20" width="4.20" height="5.00" rx="1.76" transform="rotate(0.0 1342.9 1625)"/><rect x="1340.80" y="1614.20" width="4.20" height="5.00" rx="1.76" transform="rotate(45.0 1342.9 1625)"/><rect x="1340.80" y="1614.20" width="4.20" height="5.00" rx="1.76" transform="rotate(90.0 1342.9 1625)"/><rect x="1340.80" y="1614.20" width="4.20" height="5.00" rx="1.76" transform="rotate(135.0 1342.9 1625)"/><rect x="1340.80" y="1614.20" width="4.20" height="5.00" rx="1.76" transform="rotate(180.0 1342.9 1625)"/><rect x="1340.80" y="1614.20" width="4.20" height="5.00" rx="1.76" transform="rotate(225.0 1342.9 1625)"/><rect x="1340.80" y="1614.20" width="4.20" height="5.00" rx="1.76" transform="rotate(270.0 1342.9 1625)"/><rect x="1340.80" y="1614.20" width="4.20" height="5.00" rx="1.76" transform="rotate(315.0 1342.9 1625)"/></g><circle cx="1342.9" cy="1625" r="3.7" fill="#3b3f4a"/>
<g fill="#fff"><circle cx="1357.1" cy="1614.9" r="5"/><rect x="1355.70" y="1607.90" width="2.80" height="4.00" rx="1.18" transform="rotate(0.0 1357.1 1614.9)"/><rect x="1355.70" y="1607.90" width="2.80" height="4.00" rx="1.18" transform="rotate(45.0 1357.1 1614.9)"/><rect x="1355.70" y="1607.90" width="2.80" height="4.00" rx="1.18" transform="rotate(90.0 1357.1 1614.9)"/><rect x="1355.70" y="1607.90" width="2.80" height="4.00" rx="1.18" transform="rotate(135.0 1357.1 1614.9)"/><rect x="1355.70" y="1607.90" width="2.80" height="4.00" rx="1.18" transform="rotate(180.0 1357.1 1614.9)"/><rect x="1355.70" y="1607.90" width="2.80" height="4.00" rx="1.18" transform="rotate(225.0 1357.1 1614.9)"/><rect x="1355.70" y="1607.90" width="2.80" height="4.00" rx="1.18" transform="rotate(270.0 1357.1 1614.9)"/><rect x="1355.70" y="1607.90" width="2.80" height="4.00" rx="1.18" transform="rotate(315.0 1357.1 1614.9)"/></g><circle cx="1357.1" cy="1614.9" r="2" fill="#3b3f4a"/>
<line x1="1390.4" y1="1598" x2="1390.4" y2="1646" stroke="#111318" stroke-width="2" stroke-dasharray="2 4"/>
<rect x="1410" y="1598" width="50" height="50" rx="8" fill="#3b3f4a" />
<circle cx="1435" cy="1610.5" r="4.4" fill="#fff"/>
<circle cx="1435" cy="1622.5" r="4.4" fill="#fff"/>
<circle cx="1435" cy="1634.5" r="4.4" fill="#fff"/>
<rect x="2190.4" y="1166.3" width="453" height="57" rx="8" fill="#3b3f4a" />
<rect x="2588" y="1168" width="2" height="53" rx="0" fill="#272a32" />
<path d="M2608,1190 L2626,1190 L2617,1200 Z" fill="#fff"/>
<rect x="2298.3" y="1232.5" width="345" height="57" rx="8" fill="#3b3f4a" />
<rect x="2588" y="1234.5" width="2" height="53" rx="0" fill="#272a32" />
<rect x="2590" y="1254" width="53" height="1.5" rx="0" fill="#272a32" />
<path d="M2607.0,1252.8 L2616,1245.8 L2625.0,1252.8" fill="none" stroke="#fff" stroke-width="2.6" stroke-linecap="round" stroke-linejoin="miter"/>
<path d="M2607.0,1268.1 L2616,1275.1 L2625.0,1268.1" fill="none" stroke="#fff" stroke-width="2.6" stroke-linecap="round" stroke-linejoin="miter"/>
<rect x="2440.5" y="1294.6" width="55" height="62.7" rx="8" fill="#3b3f4a" />
<rect x="2466.0" y="1310.0" width="4" height="31.6" fill="#fff"/>
<rect x="2452.2" y="1323.8" width="31.6" height="4" fill="#fff"/>
<g transform="translate(2524.4,1307.8) scale(1.11)">
<path d="M8.3,2 L10,0 L20.2,0 L22,2 Z" fill="#95979c"/>
<rect x="0" y="2" width="30.2" height="4.1" rx="1" fill="#95979c"/>
<path d="M4.2,7.7 L4.2,24.6 Q4.2,30.1 9.7,30.1 L20.7,30.1 Q26.2,30.1 26.2,24.6 L26.2,7.7" fill="none" stroke="#95979c" stroke-width="4.2"/>
<rect x="10.2" y="9.8" width="2.2" height="14.2" fill="#95979c"/>
<rect x="14.1" y="9.8" width="2.2" height="14.2" fill="#95979c"/>
<rect x="18.2" y="9.8" width="2.2" height="14.2" fill="#95979c"/>
</g>
<circle cx="2612" cy="1312.5" r="4.5" fill="#95979c"/>
<circle cx="2612" cy="1326.2" r="4.5" fill="#95979c"/>
<circle cx="2612" cy="1339.4" r="4.5" fill="#95979c"/>
<rect x="2676" y="1166" width="589" height="72" rx="8" fill="#3b3f4a" />
<rect x="2676" y="1246" width="589" height="72" rx="8" fill="#3b3f4a" />
<rect x="2676" y="1406" width="589" height="72" rx="8" fill="#3b3f4a" />
<rect x="2676" y="1486" width="589" height="72" rx="8" fill="#3b3f4a" />
<rect x="2676" y="1566" width="589" height="72" rx="8" fill="#3b3f4a" />
<rect x="2676" y="1326" width="510" height="72" rx="8" fill="#3b3f4a" />
<rect x="3194" y="1326" width="71" height="72" rx="8" fill="#3b3f4a" />
<g fill="#fff"><circle cx="3230" cy="1362" r="13"/><rect x="3226.60" y="1345.40" width="6.80" height="5.60" rx="2.86" transform="rotate(0.0 3230 1362)"/><rect x="3226.60" y="1345.40" width="6.80" height="5.60" rx="2.86" transform="rotate(45.0 3230 1362)"/><rect x="3226.60" y="1345.40" width="6.80" height="5.60" rx="2.86" transform="rotate(90.0 3230 1362)"/><rect x="3226.60" y="1345.40" width="6.80" height="5.60" rx="2.86" transform="rotate(135.0 3230 1362)"/><rect x="3226.60" y="1345.40" width="6.80" height="5.60" rx="2.86" transform="rotate(180.0 3230 1362)"/><rect x="3226.60" y="1345.40" width="6.80" height="5.60" rx="2.86" transform="rotate(225.0 3230 1362)"/><rect x="3226.60" y="1345.40" width="6.80" height="5.60" rx="2.86" transform="rotate(270.0 3230 1362)"/><rect x="3226.60" y="1345.40" width="6.80" height="5.60" rx="2.86" transform="rotate(315.0 3230 1362)"/></g><circle cx="3230" cy="1362" r="6.8" fill="#3b3f4a"/>
<rect x="0" y="1662" width="3270" height="52" rx="0" fill="#262930" />
<rect x="0" y="1662" width="3270" height="1.5" rx="0" fill="#3a3d46" />
<rect x="2443.85" y="1663" width="1.5" height="51" rx="0" fill="#3a3d46" />
<rect x="2510.25" y="1663" width="1.5" height="51" rx="0" fill="#3a3d46" />
<rect x="2691.95" y="1663" width="1.5" height="51" rx="0" fill="#3a3d46" />
<rect x="2873.85" y="1663" width="1.5" height="51" rx="0" fill="#3a3d46" />
<rect x="3021.85" y="1663" width="1.5" height="51" rx="0" fill="#3a3d46" />
<rect x="2461.7" y="1696.3" width="6.200000000000273" height="9.700000000000045" rx="2.5" fill="#5b5e65" />
<rect x="2469.9" y="1690.5" width="6.099999999999909" height="15.5" rx="2.5" fill="#5b5e65" />
<rect x="2478" y="1684.3" width="5.900000000000091" height="21.700000000000045" rx="2.5" fill="#5b5e65" />
<rect x="2486" y="1677.8" width="6.199999999999818" height="28.200000000000045" rx="2.5" fill="#5b5e65" />
<circle cx="2544" cy="1692" r="5.1" fill="#7b7e86"/>
<path d="M2538.3,1684.8 Q2532,1692 2538.3,1699.2 M2549.7,1684.8 Q2556,1692 2549.7,1699.2" fill="none" stroke="#575a62" stroke-width="3" stroke-linecap="round"/>
<path d="M2534.6,1681.2 Q2526,1692 2534.6,1702.8 M2553.4,1681.2 Q2562,1692 2553.4,1702.8" fill="none" stroke="#393c44" stroke-width="3.4" stroke-linecap="round"/>
<circle cx="2726" cy="1692" r="14" fill="#585b63"/>
</svg>
<svg id="tx" width="3270" height="1714" viewBox="0 0 3270 1714">
<text x="1331.75" y="27.7" font-size="26" font-weight="700" fill="#b5b5b5" textLength="609.98" lengthAdjust="spacingAndGlyphs">OBS 31.0.2 - Profile: Untitled - Scenes: Untitled</text>
<text x="17.31" y="983.7" font-size="20" font-weight="400" fill="#a3a6ab" textLength="39.47" lengthAdjust="spacingAndGlyphs">69%</text>
<text x="88.50" y="983.7" font-size="20" font-weight="400" fill="#a3a6ab" textLength="150.94" lengthAdjust="spacingAndGlyphs">Scale to Window</text>
<text x="72.32" y="1056.3" font-size="25.4" font-weight="400" fill="#f4f5f7" stroke="#f4f5f7" stroke-width="0.3" textLength="103.84" lengthAdjust="spacingAndGlyphs">Donation</text>
<text x="488.35" y="1056.1" font-size="25.4" font-weight="400" fill="#f4f5f7" stroke="#f4f5f7" stroke-width="0.3" textLength="114.55" lengthAdjust="spacingAndGlyphs">Properties</text>
<text x="712.28" y="1056.1" font-size="25.4" font-weight="400" fill="#f4f5f7" stroke="#f4f5f7" stroke-width="0.3" textLength="66.52" lengthAdjust="spacingAndGlyphs">Filters</text>
<text x="840.20" y="1055.6" font-size="25.4" font-weight="400" fill="#f4f5f7" stroke="#f4f5f7" stroke-width="0.3" textLength="89.10" lengthAdjust="spacingAndGlyphs">Window</text>
<text x="973.49" y="1055.6" font-size="25.4" font-weight="400" fill="#f4f5f7" stroke="#f4f5f7" stroke-width="0.3" textLength="309.82" lengthAdjust="spacingAndGlyphs">[ZEPETO_LIVE] ZEPETO_LIVE</text>
<text x="40.40" y="1138" font-size="25.0" font-weight="700" fill="#f4f5f7" stroke="#f4f5f7" stroke-width="0.5" textLength="81.04" lengthAdjust="spacingAndGlyphs">Scenes</text>
<text x="712.40" y="1138" font-size="25.0" font-weight="700" fill="#f4f5f7" stroke="#f4f5f7" stroke-width="0.5" textLength="91.94" lengthAdjust="spacingAndGlyphs">Sources</text>
<text x="1358.00" y="1138" font-size="25.0" font-weight="700" fill="#f4f5f7" stroke="#f4f5f7" stroke-width="0.5" textLength="143.96" lengthAdjust="spacingAndGlyphs">Audio Mixer</text>
<text x="2224.60" y="1138" font-size="25.0" font-weight="700" fill="#f4f5f7" stroke="#f4f5f7" stroke-width="0.5" textLength="207.35" lengthAdjust="spacingAndGlyphs">Scene Transitions</text>
<text x="2706.60" y="1138" font-size="25.0" font-weight="700" fill="#f4f5f7" stroke="#f4f5f7" stroke-width="0.5" textLength="99.75" lengthAdjust="spacingAndGlyphs">Controls</text>
<text x="21.63" y="1195.0" font-size="25.4" font-weight="400" fill="#f4f5f7" stroke="#f4f5f7" stroke-width="0.3" textLength="65.80" lengthAdjust="spacingAndGlyphs">Scene</text>
<text x="725.61" y="1200.0" font-size="25.4" font-weight="400" fill="#f4f5f7" stroke="#f4f5f7" stroke-width="0.3" textLength="104.86" lengthAdjust="spacingAndGlyphs">Donation</text>
<text x="727.00" y="1268.1" font-size="25.4" font-weight="400" fill="#f4f5f7" stroke="#f4f5f7" stroke-width="0.3" textLength="184.26" lengthAdjust="spacingAndGlyphs">Window Capture</text>
<text x="1329.94" y="1183.0" font-size="25.4" font-weight="400" fill="#f4f5f7" stroke="#f4f5f7" stroke-width="0.3" textLength="90.06" lengthAdjust="spacingAndGlyphs">Mic/Aux</text>
<text x="2084.80" y="1182.6" font-size="25.4" font-weight="400" fill="#8d9096" stroke="#8d9096" stroke-width="0.3" textLength="70.83" lengthAdjust="spacingAndGlyphs">0.0 dB</text>
<text x="1385.09" y="1230" font-size="16" font-weight="400" fill="#ffffff" stroke="#ffffff" stroke-width="0.25">-60</text>
<text x="1447.19" y="1230" font-size="16" font-weight="400" fill="#ffffff" stroke="#ffffff" stroke-width="0.25">-55</text>
<text x="1511.19" y="1230" font-size="16" font-weight="400" fill="#ffffff" stroke="#ffffff" stroke-width="0.25">-50</text>
<text x="1573.19" y="1230" font-size="16" font-weight="400" fill="#ffffff" stroke="#ffffff" stroke-width="0.25">-45</text>
<text x="1637.19" y="1230" font-size="16" font-weight="400" fill="#ffffff" stroke="#ffffff" stroke-width="0.25">-40</text>
<text x="1698.89" y="1230" font-size="16" font-weight="400" fill="#ffffff" stroke="#ffffff" stroke-width="0.25">-35</text>
<text x="1763.19" y="1230" font-size="16" font-weight="400" fill="#ffffff" stroke="#ffffff" stroke-width="0.25">-30</text>
<text x="1827.09" y="1230" font-size="16" font-weight="400" fill="#ffffff" stroke="#ffffff" stroke-width="0.25">-25</text>
<text x="1889.09" y="1230" font-size="16" font-weight="400" fill="#ffffff" stroke="#ffffff" stroke-width="0.25">-20</text>
<text x="1952.79" y="1230" font-size="16" font-weight="400" fill="#ffffff" stroke="#ffffff" stroke-width="0.25">-15</text>
<text x="2014.89" y="1230" font-size="16" font-weight="400" fill="#ffffff" stroke="#ffffff" stroke-width="0.25">-10</text>
<text x="2083.04" y="1230" font-size="16" font-weight="400" fill="#ffffff" stroke="#ffffff" stroke-width="0.25">-5</text>
<text x="2146.10" y="1230" font-size="16" font-weight="400" fill="#ffffff" stroke="#ffffff" stroke-width="0.25">0</text>
<text x="2211.83" y="1203.1" font-size="25.4" font-weight="400" fill="#f4f5f7" stroke="#f4f5f7" stroke-width="0.3" textLength="53.21" lengthAdjust="spacingAndGlyphs">Fade</text>
<text x="2190.31" y="1268.8" font-size="25.4" font-weight="400" fill="#f4f5f7" stroke="#f4f5f7" stroke-width="0.3" textLength="98.86" lengthAdjust="spacingAndGlyphs">Duration</text>
<text x="2320.70" y="1268.8" font-size="25.4" font-weight="400" fill="#f4f5f7" stroke="#f4f5f7" stroke-width="0.3" textLength="79.40" lengthAdjust="spacingAndGlyphs">300 ms</text>
<text x="2883.75" y="1210.9" font-size="25.4" font-weight="400" fill="#f4f5f7" stroke="#f4f5f7" stroke-width="0.3" textLength="174.56" lengthAdjust="spacingAndGlyphs">Start Streaming</text>
<text x="2884.46" y="1290.9" font-size="25.4" font-weight="400" fill="#f4f5f7" stroke="#f4f5f7" stroke-width="0.3" textLength="173.44" lengthAdjust="spacingAndGlyphs">Start Recording</text>
<text x="2898.74" y="1450.9" font-size="25.4" font-weight="400" fill="#f4f5f7" stroke="#f4f5f7" stroke-width="0.3" textLength="142.73" lengthAdjust="spacingAndGlyphs">Studio Mode</text>
<text x="2925.78" y="1530.9" font-size="25.4" font-weight="400" fill="#f4f5f7" stroke="#f4f5f7" stroke-width="0.3" textLength="88.82" lengthAdjust="spacingAndGlyphs">Settings</text>
<text x="2950.30" y="1610.9" font-size="25.4" font-weight="400" fill="#f4f5f7" stroke="#f4f5f7" stroke-width="0.3" textLength="39.97" lengthAdjust="spacingAndGlyphs">Exit</text>
<text x="2817.57" y="1370.9" font-size="25.4" font-weight="400" fill="#f4f5f7" stroke="#f4f5f7" stroke-width="0.3" textLength="224.26" lengthAdjust="spacingAndGlyphs">Start Virtual Camera</text>
<text x="2580.50" y="1701.1" font-size="25.4" font-weight="400" fill="#8d9096" stroke="#8d9096" stroke-width="0.3" textLength="93.55" lengthAdjust="spacingAndGlyphs">00:00:00</text>
<text x="2762.60" y="1701.1" font-size="25.4" font-weight="400" fill="#8d9096" stroke="#8d9096" stroke-width="0.3" textLength="93.55" lengthAdjust="spacingAndGlyphs">00:00:00</text>
<text x="2891.65" y="1701.1" font-size="25.4" font-weight="400" fill="#f4f5f7" stroke="#f4f5f7" stroke-width="0.3" textLength="112.98" lengthAdjust="spacingAndGlyphs">CPU: 4.9%</text>
<text x="3040.40" y="1701.1" font-size="25.4" font-weight="400" fill="#f4f5f7" stroke="#f4f5f7" stroke-width="0.3" textLength="189.39" lengthAdjust="spacingAndGlyphs">30.00 / 30.00 FPS</text>
</svg>
</body></html>
